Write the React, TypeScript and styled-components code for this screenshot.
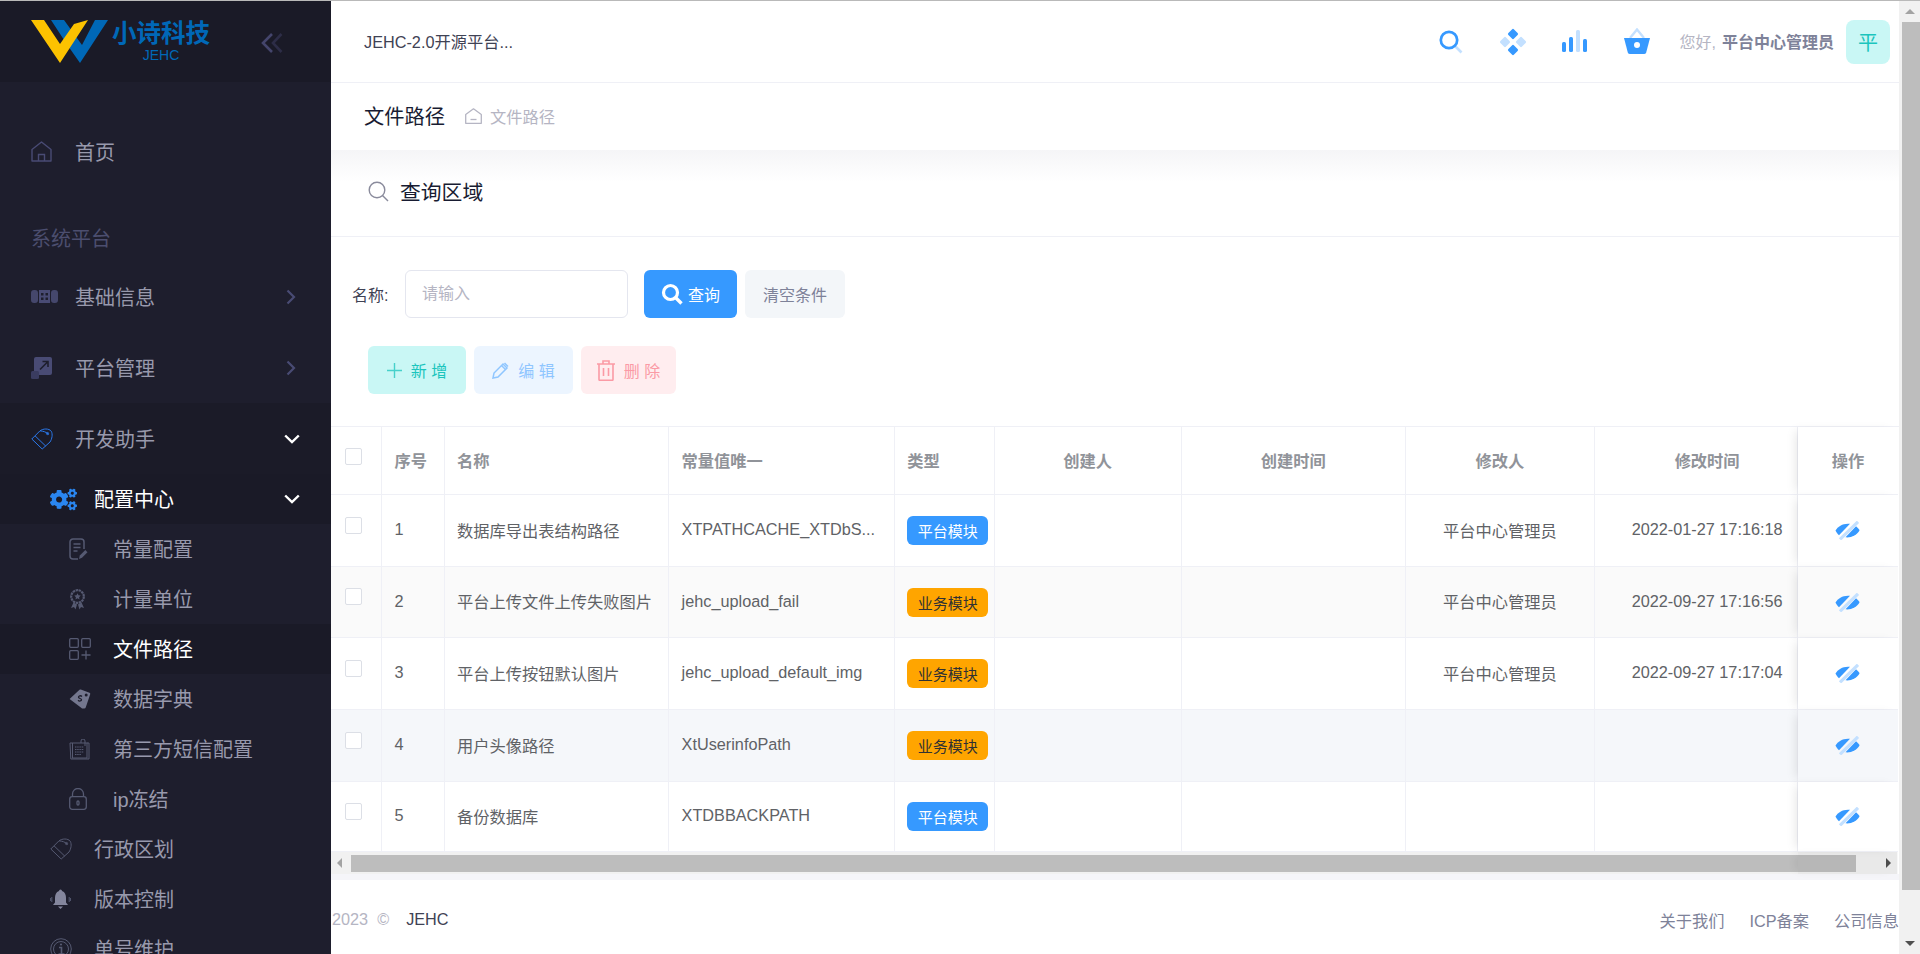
import React from 'react';
import styled, { createGlobalStyle } from 'styled-components';
import { FaCogs } from 'react-icons/fa';

const GlobalStyle = createGlobalStyle`
  html, body {
    margin: 0;
    padding: 0;
    height: 100%;
    overflow: hidden;
    background: #fff;
  }
  body {
    font-family: "Liberation Sans", "Noto Sans CJK SC", sans-serif;
    font-size: 16.25px;
    color: #3f4254;
  }
  * { box-sizing: border-box; }
`;

const SUB_ICON = '#565a72';
const MENU_ICON = '#494b74';

function HomeIcon() {
  return (
    <svg width="21" height="21" viewBox="0 0 21 21" fill="none" stroke={MENU_ICON} strokeWidth="1.4">
      <path d="M1 8.5 10.5 1 20 8.5V20H1Z" strokeLinejoin="round" />
      <path d="M7.5 20v-6.5h6V20" />
    </svg>
  );
}

function PillIcon() {
  return (
    <svg width="27" height="13" viewBox="0 0 27 13">
      <rect width="7" height="13" rx="3" fill="#45476c" />
      <rect x="20" width="7" height="13" rx="3" fill="#45476c" />
      <rect x="8" width="11" height="13" fill="#494b74" />
      <g fill="#1e1e2d">
        <rect x="10" y="3" width="2.5" height="2.5" />
        <rect x="14.5" y="3" width="2.5" height="2.5" />
        <rect x="10" y="7.5" width="2.5" height="2.5" />
        <rect x="14.5" y="7.5" width="2.5" height="2.5" />
      </g>
    </svg>
  );
}

function ResizeIcon() {
  return (
    <svg width="21" height="22" viewBox="0 0 21 22" fill="none">
      <rect x="3" width="18" height="18" rx="2" fill="#494b74" />
      <rect y="14" width="8" height="8" rx="1.5" fill="#3a3c60" />
      <path d="M9 12.5 16.5 5M11.5 4.5h5.5V10" stroke="#1e1e2d" strokeWidth="1.6" />
    </svg>
  );
}

function TagIcon({ color }: { color: string }) {
  return (
    <svg width="22" height="22" viewBox="0 0 22 22" fill="none" stroke={color} strokeWidth="1">
      <path d="M.8 11 9 2.800C12 .5 18 .2 20.200 3.200c1.800 3 .8 7.800-1.200 10.800l-7.800 7Z" strokeLinejoin="round" />
      <path d="M4 7.800 14.800 18.200M9 2.800c3 .4 6.500 1 8.500 3.700" />
      <circle cx="16.500" cy="5.500" r="1.100" />
    </svg>
  );
}

function DocPenIcon() {
  return (
    <svg width="19" height="22" viewBox="0 0 19 22" fill="none" stroke={SUB_ICON} strokeWidth="1.5">
      <path d="M9 21H4a3 3 0 0 1-3-3V4a3 3 0 0 1 3-3h8a3 3 0 0 1 3 3v7" />
      <path d="M4.500 6h7M4.500 9.500h7M4.500 13h4" />
      <path d="M10 21l.8-3.500 5.500-5.500 2.200 2.200-5.500 5.500Z" fill={SUB_ICON} stroke="none" />
    </svg>
  );
}

function AwardIcon() {
  return (
    <svg width="17" height="21" viewBox="0 0 17 21" fill="none" stroke={SUB_ICON}>
      <circle cx="8.5" cy="7.5" r="6.3" strokeWidth="2.2" strokeDasharray="2.4 .6" />
      <path d="M8.500 4.200l1 2.100 2.200.3-1.600 1.600.4 2.200-2-1.100-2 1.100.4-2.200-1.600-1.600 2.200-.3Z" fill={SUB_ICON} stroke="none" />
      <path d="M4.500 13.500 2 19l3-1 1.500 2.500L8 15.500M12.500 13.500 15 19l-3-1-1.500 2.500L9 15.500" fill={SUB_ICON} stroke="none" />
    </svg>
  );
}

function AppsIcon() {
  return (
    <svg width="22" height="22" viewBox="0 0 22 22" fill="none" stroke={SUB_ICON} strokeWidth="1.3">
      <rect x=".7" y=".7" width="8.6" height="8.6" rx="1" />
      <rect x="12.7" y=".7" width="8.6" height="8.6" rx="1" />
      <rect x=".7" y="12.7" width="8.6" height="8.6" rx="1" />
      <path d="M17 12.500v9M12.500 17h9" />
    </svg>
  );
}

function PriceIcon() {
  return (
    <svg width="22" height="20" viewBox="0 0 22 20">
      <path d="M.6 10 10.500.8Q11 .4 11.800.6L20.500 3.800Q21.500 4.200 21.200 5.200L16.800 18.200Q16.500 19.500 15.200 19.500H13.500Q13 19.500 12.500 19Z" fill="#74778e" />
      <circle cx="17.2" cy="6" r="1.5" fill="#1e1e2d" />
      <path d="M13 7.500c-1.500-1.500-3.500-.5-3.500.7 0 1.600 3 1 3 2.600 0 1.200-2 1.800-3.500.5" fill="none" stroke="#1e1e2d" strokeWidth="1.3" />
    </svg>
  );
}

function NoteIcon() {
  return (
    <svg width="21" height="21" viewBox="0 0 21 21" fill="none" stroke={SUB_ICON} strokeWidth="1">
      <path d="M3 4H1l.8 16H20V4h-2" />
      <rect x="3.5" y="4" width="14.5" height="15" />
      <path d="M6 8h9M6 10.500h9M6 13h9M6 15.500h6" strokeDasharray="1.5 .7" />
      <path d="M12 4V2a2 2 0 0 1 4 0v5" />
    </svg>
  );
}

function LockIcon() {
  return (
    <svg width="18" height="22" viewBox="0 0 18 22" fill="none" stroke={SUB_ICON} strokeWidth="1.3">
      <rect x=".7" y="8.7" width="16.6" height="12.6" rx="2.5" />
      <path d="M3.500 8.700V6a5.500 5.500 0 0 1 11 0v2.700" />
      <rect x="8" y="13" width="2" height="4" rx="1" />
    </svg>
  );
}

function BellIcon() {
  return (
    <svg width="21" height="21" viewBox="0 0 21 21" fill="none">
      <path d="M10.500.5a1.500 1.500 0 0 1 1.500 1.500C15 3 16 6 16 9v4.500l2 2.500H3l2-2.500V9c0-3 1-6 4-7A1.500 1.500 0 0 1 10.500.5Z" fill="#84869d" />
      <path d="M8 17.500h5L10.500 20Z" fill="#84869d" />
      <path d="M1.800 8v5M.4 9v3M19.200 8v5M20.600 9v3" stroke={SUB_ICON} />
    </svg>
  );
}

function InfoIcon() {
  return (
    <svg width="22" height="22" viewBox="0 0 22 22" fill="none" stroke={SUB_ICON}>
      <circle cx="11" cy="11" r="10.3" strokeWidth="1" />
      <circle cx="11" cy="11" r="7.5" strokeWidth="1" />
      <path d="M9 9.500h2.500V16M8.500 16h6" strokeWidth="1.6" />
      <circle cx="11" cy="6.5" r="1.1" fill={SUB_ICON} stroke="none" />
    </svg>
  );
}

function ChevronRight() {
  return (
    <svg width="10" height="16" viewBox="0 0 10 16" fill="none" stroke={MENU_ICON} strokeWidth="2.2">
      <path d="M1.500 1.500 8 8l-6.500 6.500" />
    </svg>
  );
}

function ChevronDown() {
  return (
    <svg width="16" height="10" viewBox="0 0 16 10" fill="none" stroke="#fff" strokeWidth="2.4">
      <path d="M1.200 1.500 8 8l6.800-6.500" />
    </svg>
  );
}

function Logo() {
  return (
    <svg width="78" height="44" viewBox="0 0 78 44">
      <path d="M20 0H33L51 25 64 0H77L49 43 35 23Z" fill="#0068b7" />
      <path d="M0 0H13L29 24 43 4 57 0 29 43Z" fill="#fcc200" />
    </svg>
  );
}

function CollapseIcon() {
  return (
    <svg width="22" height="20" viewBox="0 0 22 20" fill="none" strokeWidth="2.6">
      <path d="M20.500 1 12 10l8.500 9" stroke="#2d2d47" />
      <path d="M11 1 2 10l9 9" stroke="#44456c" />
    </svg>
  );
}

function TopSearchIcon() {
  return (
    <svg width="24" height="24" viewBox="0 0 24 24" fill="none">
      <path d="M16.500 16.500 22.500 22.500" stroke="#c3e0ff" strokeWidth="2.6" />
      <circle cx="10" cy="10" r="8.2" stroke="#3699ff" strokeWidth="2.7" />
    </svg>
  );
}

function TopDiamondIcon() {
  return (
    <svg width="28" height="28" viewBox="0 0 28 28">
      <rect x="10" y="2" width="8" height="8" rx="1.5" transform="rotate(45 14 6)" fill="#3699ff" />
      <rect x="10" y="18" width="8" height="8" rx="1.5" transform="rotate(45 14 22)" fill="#3699ff" />
      <rect x="2" y="10" width="8" height="8" rx="1.5" transform="rotate(45 6 14)" fill="#c3e0ff" />
      <rect x="18" y="10" width="8" height="8" rx="1.5" transform="rotate(45 22 14)" fill="#c3e0ff" />
    </svg>
  );
}

function TopBarsIcon() {
  return (
    <svg width="26" height="23" viewBox="0 0 26 23">
      <rect y="12" width="4" height="10" rx="1.5" fill="#3699ff" />
      <rect x="7" y="7" width="4" height="15" rx="1.5" fill="#3699ff" />
      <rect x="14" width="4" height="22" rx="1.5" fill="#c3e0ff" />
      <rect x="21" y="9" width="4" height="13" rx="1.5" fill="#3699ff" />
    </svg>
  );
}

function TopBasketIcon() {
  return (
    <svg width="26" height="27" viewBox="0 0 26 27">
      <path d="M6 10 13 1.500 20 10" fill="none" stroke="#c3e0ff" strokeWidth="2.4" />
      <path d="M0 10H26L22.200 24.500Q21.700 26 20 26H6Q4.300 26 3.800 24.500Z" fill="#3699ff" />
      <circle cx="13" cy="17" r="3" fill="#fff" />
    </svg>
  );
}

function ViewIcon() {
  return (
    <svg width="25" height="19" viewBox="0 0 25 19">
      <path d="M.5 9.500C3 5 8.500 2 15 2.800L4 14.200C2.500 13 1.300 11.300.5 9.500Z" fill="#3699ff" />
      <path d="M24.500 9.500C22 14 16 17 10.500 16.300L21 5.300C22.500 6.500 23.800 8 24.500 9.500Z" fill="#3699ff" />
      <path d="M23 .8 5 18.300" stroke="#c3e0ff" strokeWidth="3.2" />
    </svg>
  );
}

function QueryIcon() {
  return (
    <svg width="22" height="22" viewBox="0 0 22 22" fill="none" stroke="#fff">
      <circle cx="9.5" cy="9.5" r="7" strokeWidth="3.2" />
      <path d="M14.500 14.500 20.500 20.500" strokeWidth="3.4" />
    </svg>
  );
}

function BreadcrumbHome() {
  return (
    <svg width="17" height="16" viewBox="0 0 17 16" fill="none" stroke="#b5b5c3" strokeWidth="1.3">
      <path d="M.7 6.500 8.500.8l7.800 5.700v8.800H.7Z" strokeLinejoin="round" />
      <path d="M5.500 11.500h6" />
    </svg>
  );
}

function OutlineSearch() {
  return (
    <svg width="21" height="21" viewBox="0 0 21 21" fill="none" stroke="#8a8b9c" strokeWidth="1.4">
      <circle cx="9" cy="9" r="7.8" />
      <path d="M14.500 14.500 20 20" />
    </svg>
  );
}

function PlusIcon() {
  return (
    <svg width="15" height="15" viewBox="0 0 15 15" stroke="#1bc5bd" strokeWidth="1.4" opacity=".75">
      <path d="M7.500 0v15M0 7.500h15" />
    </svg>
  );
}

function PencilIcon() {
  return (
    <svg width="17" height="17" viewBox="0 0 17 17" fill="none" stroke="#8fc6ff" strokeWidth="1.5">
      <path d="M1 16l1-5L11 2l4 4-9 9Z" />
      <path d="M9.500 3.500l4 4M12.500 1l3.500 3.500" />
    </svg>
  );
}

function TrashIcon() {
  return (
    <svg width="18" height="21" viewBox="0 0 18 21" fill="none" stroke="#fb9aa5" strokeWidth="1.6">
      <path d="M0 4h18M6 4V1h6v3M2 4v15.500a.8.800 0 0 0 .8.800h12.400a.8.800 0 0 0 .8-.8V4" />
      <path d="M6.500 8v8M11.500 8v8" />
    </svg>
  );
}

const Page = styled.div`
  display: flex;
  height: 954px;
  border-top: 1px solid #b9b9b9;
  overflow: hidden;
`;

const Aside = styled.aside`
  flex: 0 0 331px;
  background: #1e1e2d;
  overflow: hidden;
  display: flex;
  flex-direction: column;
`;

const Brand = styled.div`
  flex: 0 0 81px;
  background: #1a1a27;
  display: flex;
  align-items: flex-start;
  padding: 19px 48px 0 31px;
`;

const BrandText = styled.div`
  margin-left: 3px;
  display: flex;
  flex-direction: column;
  align-items: center;
  color: #0068b7;
  width: 98px;
`;

const BrandName = styled.div`
  font-size: 24.5px;
  font-weight: 700;
  line-height: 28px;
  white-space: nowrap;
`;

const BrandSub = styled.div`
  font-size: 14px;
  line-height: 14px;
`;

const CollapseSlot = styled.div`
  margin-left: auto;
  margin-top: 13px;
`;

const Menu = styled.nav`
  padding-top: 34px;
`;

const MenuSection = styled.div`
  height: 74px;
  display: flex;
  align-items: flex-end;
  padding: 0 0 8px 31px;
  font-size: 20px;
  line-height: 28px;
  color: #4c4e6f;
`;

const MenuRow = styled.a<{ $level: number; $active?: boolean; $open?: boolean; $dark?: boolean }>`
  display: flex;
  align-items: center;
  height: ${p => (p.$level === 0 ? 71 : 50)}px;
  padding-left: ${p => 31 + p.$level * 19}px;
  padding-right: ${p => (p.$open ? 31 : 35)}px;
  font-size: 20px;
  color: ${p => (p.$active ? '#fff' : '#9899ac')};
  background: ${p => (p.$active ? '#1a1a27' : p.$dark ? '#1b1b28' : 'transparent')};
`;

const MenuLabel = styled.span<{ $sub?: boolean }>`
  margin-bottom: ${p => (p.$sub ? 2 : 0)}px;
`;

const MenuIcon = styled.span`
  flex: 0 0 44px;
  display: flex;
  align-items: center;
`;

const MenuArrow = styled.span`
  margin-left: auto;
  display: flex;
`;

const CogIcon = styled(FaCogs)`
  color: #2a86f0;
  font-size: 27px;
`;

const Main = styled.main`
  flex: 1;
  min-width: 0;
  display: flex;
  flex-direction: column;
  background: #fff;
`;

const Topbar = styled.header`
  flex: 0 0 82px;
  display: flex;
  align-items: center;
  padding: 0 9px 0 33px;
  border-bottom: 1px solid #eff0f6;
`;

const SiteTitle = styled.div`
  margin-bottom: 2px;
  font-size: 16.25px;
  color: #3f4254;
`;

const TopTools = styled.div`
  margin-left: auto;
  display: flex;
  align-items: center;
`;

const ToolSlot = styled.span`
  width: 62px;
  display: flex;
  justify-content: center;
`;

const Hello = styled.span`
  margin: 0 0 2px 12px;
  font-size: 16px;
  color: #b5b5c3;
  white-space: nowrap;
`;

const UserName = styled.b`
  margin-left: 6px;
  font-weight: 700;
  color: #7e8299;
`;

const Avatar = styled.span`
  margin-left: 12px;
  width: 44px;
  height: 44px;
  border-radius: 8px;
  background: #c9f7f5;
  color: #1bc5bd;
  font-size: 20px;
  display: flex;
  align-items: center;
  justify-content: center;
`;

const TitleBar = styled.div`
  flex: 0 0 67px;
  display: flex;
  align-items: center;
  padding: 0 0 2px 33px;
`;

const PageTitle = styled.h1`
  margin: 0 20px 0 0;
  font-size: 20.25px;
  font-weight: 400;
  color: #181c32;
`;

const Crumb = styled.span`
  display: flex;
  align-items: center;
  gap: 8px;
  font-size: 16.25px;
  color: #b5b5c3;
`;

const CardHead = styled.div`
  flex: 0 0 87px;
  display: flex;
  align-items: center;
  gap: 11px;
  padding: 0 0 4px 37px;
  border-bottom: 1px solid #eff0f6;
  background: linear-gradient(#f5f5f7, #fff 32px);
  font-size: 20.8px;
  color: #181c32;
`;

const QueryRow = styled.div`
  display: flex;
  align-items: center;
  padding: 33px 0 0 21px;
`;

const FieldLabel = styled.label`
  flex: 0 0 53px;
  font-size: 16px;
  color: #3f4254;
`;

const Input = styled.input`
  width: 223px;
  height: 48px;
  padding: 0 16px;
  border: 1px solid #e4e6ef;
  border-radius: 6px;
  font: inherit;
  font-size: 16px;
  &::placeholder { color: #b5b5c3; opacity: 1; }
`;

const SearchButton = styled.button`
  margin-left: 16px;
  width: 93px;
  height: 48px;
  border: 0;
  border-radius: 6px;
  background: #3699ff;
  color: #fff;
  font: inherit;
  font-size: 16px;
  display: flex;
  align-items: center;
  justify-content: center;
  gap: 5px;
`;

const ClearButton = styled.button`
  margin-left: 8px;
  width: 100px;
  height: 48px;
  border: 0;
  border-radius: 6px;
  background: #f3f6f9;
  color: #7e8299;
  font: inherit;
  font-size: 16px;
`;

const Toolbar = styled.div`
  display: flex;
  gap: 8px;
  padding: 28px 0 32px 37px;
`;

const ActionButton = styled.button<{ $bg: string; $fg: string; $w: number }>`
  width: ${p => p.$w}px;
  height: 48px;
  border: 0;
  border-radius: 6px;
  background: ${p => p.$bg};
  color: ${p => p.$fg};
  font: inherit;
  font-size: 16px;
  display: flex;
  align-items: center;
  justify-content: center;
  gap: 9px;
`;

const TableWrap = styled.div`
  position: relative;
  padding-right: 1px;
  border-top: 1px solid #eff0f6;
`;

const Table = styled.table`
  width: 1567px;
  table-layout: fixed;
  border-collapse: separate;
  border-spacing: 0;
`;

const FIXED_SHADOW = 'box-shadow: -6px 0 10px -4px rgba(0, 0, 0, 0.1); border-right: 0; position: relative;';

const HeadCell = styled.th<{ $center?: boolean; $fixed?: boolean; $hidden?: boolean }>`
  height: 68px;
  padding: 0 12.5px 2px ${p => (p.$hidden ? 35 : 12.5)}px;
  text-align: ${p => (p.$center ? 'center' : 'left')};
  font-size: 16.25px;
  font-weight: 700;
  color: #909399;
  background: #fff;
  border-right: 1px solid #eff0f6;
  border-bottom: 1px solid #eff0f6;
  ${p => p.$fixed && FIXED_SHADOW}
`;

const BodyRow = styled.tr<{ $bg?: string; $h: number }>`
  height: ${p => p.$h}px;
  background: ${p => p.$bg || '#fff'};
`;

const Cell = styled.td<{ $center?: boolean; $fixed?: boolean; $hidden?: boolean; $tag?: boolean }>`
  padding: 0 ${p => (p.$tag ? 0 : 12.5)}px ${p => (p.$tag || p.$fixed ? 0 : 2)}px ${p => (p.$hidden ? 35 : 12.5)}px;
  text-align: ${p => (p.$center ? 'center' : 'left')};
  font-size: 16.25px;
  color: #606266;
  white-space: nowrap;
  border-right: 1px solid #eff0f6;
  border-bottom: 1px solid #eff0f6;
  ${p => p.$fixed && `background: inherit; ${FIXED_SHADOW}`}
`;

const CheckCell = styled.div<{ $head?: boolean }>`
  width: 17px;
  height: 17px;
  border: 1px solid #dcdfe6;
  border-radius: 2px;
  background: #fff;
  margin: ${p => (p.$head ? -7 : -9)}px 0 0 1.5px;
`;

const TypeTag = styled.span<{ $kind: 'platform' | 'business' }>`
  display: inline-flex;
  align-items: center;
  justify-content: center;
  width: 81px;
  height: 29px;
  border-radius: 6px;
  font-size: 15px;
  background: ${p => (p.$kind === 'platform' ? '#3699ff' : '#ffa500')};
  color: ${p => (p.$kind === 'platform' ? '#fff' : '#303133')};
`;

const ViewSlot = styled.span`
  display: flex;
  justify-content: center;
`;

const HScroll = styled.div`
  height: 22px;
  background: #f1f1f1;
  display: flex;
  align-items: center;
  padding: 0 6px;
  margin-right: 1px;
`;

const HThumb = styled.div`
  flex: 0 0 1505px;
  height: 17px;
  margin-left: 9px;
  background: #bdbdbd;
`;

const Triangle = styled.i<{ $dir: 'left' | 'right' | 'up' | 'down' }>`
  display: block;
  width: 0;
  height: 0;
  border-style: solid;
  border-color: transparent;
  ${p => p.$dir === 'left' && 'border-width: 5px 5px 5px 0; border-right-color: #a3a3a3;'}
  ${p => p.$dir === 'right' && 'border-width: 5px 0 5px 5px; border-left-color: #505050; margin-left: auto;'}
  ${p => p.$dir === 'up' && 'border-width: 0 5px 5px; border-bottom-color: #a3a3a3;'}
  ${p => p.$dir === 'down' && 'border-width: 5px 5px 0; border-top-color: #505050;'}
`;

const FixedShade = styled.div`
  position: absolute;
  right: 1px;
  bottom: 0;
  width: 100px;
  height: 22px;
  background: rgba(0, 0, 0, 0.03);
  box-shadow: -6px 0 10px -4px rgba(0, 0, 0, 0.08);
`;

const GapBar = styled.div`
  height: 6px;
  background: #f5f5f9;
`;

const Footer = styled.footer`
  flex: 1;
  display: flex;
  align-items: center;
  padding: 5px 0 0 1px;
  font-size: 16.25px;
  color: #b5b5c3;
`;

const FooterBrand = styled.span`
  margin-left: 17px;
  color: #3f4254;
`;

const FooterLinks = styled.div`
  margin-left: auto;
  display: flex;
  gap: 25px;
  color: #7e8299;
`;

const VScroll = styled.div`
  flex: 0 0 21px;
  background: #f1f1f1;
  display: flex;
  flex-direction: column;
  align-items: center;
`;

const VArrow = styled.div<{ $end?: boolean }>`
  height: 21px;
  flex: 0 0 21px;
  margin-top: ${p => (p.$end ? 'auto' : 0)};
  display: flex;
  align-items: center;
  justify-content: center;
`;

const VThumb = styled.div`
  width: 18px;
  margin-left: 2px;
  height: 868px;
  background: #bdbdbd;
`;

const columns = [
  { title: '', width: 51 },
  { title: '序号', width: 62.5 },
  { title: '名称', width: 224.5 },
  { title: '常量值唯一', width: 225.5 },
  { title: '类型', width: 100 },
  { title: '创建人', width: 187, center: true },
  { title: '创建时间', width: 224, center: true },
  { title: '修改人', width: 189, center: true },
  { title: '修改时间', width: 203, center: true, hidden: true },
  { title: '操作', width: 100, center: true, fixed: true },
];

const rows = [
  { id: 1, name: '数据库导出表结构路径', value: 'XTPATHCACHE_XTDbS...', kind: 'platform', user: '平台中心管理员', time: '2022-01-27 17:16:18', h: 72 },
  { id: 2, name: '平台上传文件上传失败图片', value: 'jehc_upload_fail', kind: 'business', user: '平台中心管理员', time: '2022-09-27 17:16:56', h: 71, bg: '#fafafa' },
  { id: 3, name: '平台上传按钮默认图片', value: 'jehc_upload_default_img', kind: 'business', user: '平台中心管理员', time: '2022-09-27 17:17:04', h: 72 },
  { id: 4, name: '用户头像路径', value: 'XtUserinfoPath', kind: 'business', user: '', time: '', h: 72, bg: '#f5f7fa' },
  { id: 5, name: '备份数据库', value: 'XTDBBACKPATH', kind: 'platform', user: '', time: '', h: 70 },
] as const;

const subMenu = [
  { label: '常量配置', icon: <DocPenIcon /> },
  { label: '计量单位', icon: <AwardIcon /> },
  { label: '文件路径', icon: <AppsIcon />, active: true },
  { label: '数据字典', icon: <PriceIcon /> },
  { label: '第三方短信配置', icon: <NoteIcon /> },
  { label: 'ip冻结', icon: <LockIcon /> },
];

function Sidebar() {
  return (
    <Aside>
      <Brand>
        <Logo />
        <BrandText>
          <BrandName>小诗科技</BrandName>
          <BrandSub>JEHC</BrandSub>
        </BrandText>
        <CollapseSlot>
          <CollapseIcon />
        </CollapseSlot>
      </Brand>
      <Menu>
        <MenuRow $level={0}>
          <MenuIcon><HomeIcon /></MenuIcon>首页
        </MenuRow>
        <MenuSection>系统平台</MenuSection>
        <MenuRow $level={0}>
          <MenuIcon><PillIcon /></MenuIcon>基础信息
          <MenuArrow><ChevronRight /></MenuArrow>
        </MenuRow>
        <MenuRow $level={0}>
          <MenuIcon><ResizeIcon /></MenuIcon>平台管理
          <MenuArrow><ChevronRight /></MenuArrow>
        </MenuRow>
        <MenuRow $level={0} $open $dark>
          <MenuIcon><TagIcon color="#2b78ea" /></MenuIcon>开发助手
          <MenuArrow><ChevronDown /></MenuArrow>
        </MenuRow>
        <MenuRow $level={1} $open $active>
          <MenuIcon><CogIcon /></MenuIcon>
          <MenuLabel $sub>配置中心</MenuLabel>
          <MenuArrow><ChevronDown /></MenuArrow>
        </MenuRow>
        {subMenu.map(item => (
          <MenuRow key={item.label} $level={2} $active={item.active}>
            <MenuIcon>{item.icon}</MenuIcon>
            <MenuLabel $sub>{item.label}</MenuLabel>
          </MenuRow>
        ))}
        <MenuRow $level={1}>
          <MenuIcon><TagIcon color={SUB_ICON} /></MenuIcon>
          <MenuLabel $sub>行政区划</MenuLabel>
        </MenuRow>
        <MenuRow $level={1}>
          <MenuIcon><BellIcon /></MenuIcon>
          <MenuLabel $sub>版本控制</MenuLabel>
        </MenuRow>
        <MenuRow $level={1}>
          <MenuIcon><InfoIcon /></MenuIcon>
          <MenuLabel $sub>单号维护</MenuLabel>
        </MenuRow>
      </Menu>
    </Aside>
  );
}

function DataTable() {
  return (
    <TableWrap>
      <Table>
        <colgroup>
          {columns.map((c, i) => (
            <col key={i} style={{ width: c.width }} />
          ))}
        </colgroup>
        <thead>
          <tr>
            {columns.map((c, i) => (
              <HeadCell key={i} $center={c.center} $fixed={c.fixed} $hidden={c.hidden}>
                {i === 0 ? <CheckCell $head /> : c.title}
              </HeadCell>
            ))}
          </tr>
        </thead>
        <tbody>
          {rows.map(r => (
            <BodyRow key={r.id} $h={r.h} $bg={'bg' in r ? r.bg : undefined}>
              <Cell><CheckCell /></Cell>
              <Cell>{r.id}</Cell>
              <Cell>{r.name}</Cell>
              <Cell>{r.value}</Cell>
              <Cell $tag>
                <TypeTag $kind={r.kind}>{r.kind === 'platform' ? '平台模块' : '业务模块'}</TypeTag>
              </Cell>
              <Cell $center />
              <Cell $center />
              <Cell $center>{r.user}</Cell>
              <Cell $center $hidden>{r.time}</Cell>
              <Cell $center $fixed>
                <ViewSlot><ViewIcon /></ViewSlot>
              </Cell>
            </BodyRow>
          ))}
        </tbody>
      </Table>
      <HScroll>
        <Triangle $dir="left" />
        <HThumb />
        <Triangle $dir="right" />
      </HScroll>
      <FixedShade />
    </TableWrap>
  );
}

export default function App() {
  return (
    <>
      <GlobalStyle />
      <Page>
        <Sidebar />
        <Main>
          <Topbar>
            <SiteTitle>JEHC-2.0开源平台...</SiteTitle>
            <TopTools>
              <ToolSlot><TopSearchIcon /></ToolSlot>
              <ToolSlot><TopDiamondIcon /></ToolSlot>
              <ToolSlot><TopBarsIcon /></ToolSlot>
              <ToolSlot><TopBasketIcon /></ToolSlot>
              <Hello>
                您好,<UserName>平台中心管理员</UserName>
              </Hello>
              <Avatar>平</Avatar>
            </TopTools>
          </Topbar>
          <TitleBar>
            <PageTitle>文件路径</PageTitle>
            <Crumb>
              <BreadcrumbHome />
              文件路径
            </Crumb>
          </TitleBar>
          <CardHead>
            <OutlineSearch />
            查询区域
          </CardHead>
          <QueryRow>
            <FieldLabel>名称:</FieldLabel>
            <Input placeholder="请输入" />
            <SearchButton>
              <QueryIcon />
              查询
            </SearchButton>
            <ClearButton>清空条件</ClearButton>
          </QueryRow>
          <Toolbar>
            <ActionButton $bg="#c9f7f5" $fg="#1bc5bd" $w={98}>
              <PlusIcon />新 增
            </ActionButton>
            <ActionButton $bg="#ecf5ff" $fg="#8fc6ff" $w={99}>
              <PencilIcon />编 辑
            </ActionButton>
            <ActionButton $bg="#ffedef" $fg="#fb9aa5" $w={95}>
              <TrashIcon />删 除
            </ActionButton>
          </Toolbar>
          <DataTable />
          <GapBar />
          <Footer>
            2023 &nbsp;©
            <FooterBrand>JEHC</FooterBrand>
            <FooterLinks>
              <span>关于我们</span>
              <span>ICP备案</span>
              <span>公司信息</span>
            </FooterLinks>
          </Footer>
        </Main>
        <VScroll>
          <VArrow><Triangle $dir="up" /></VArrow>
          <VThumb />
          <VArrow $end><Triangle $dir="down" /></VArrow>
        </VScroll>
      </Page>
    </>
  );
}
